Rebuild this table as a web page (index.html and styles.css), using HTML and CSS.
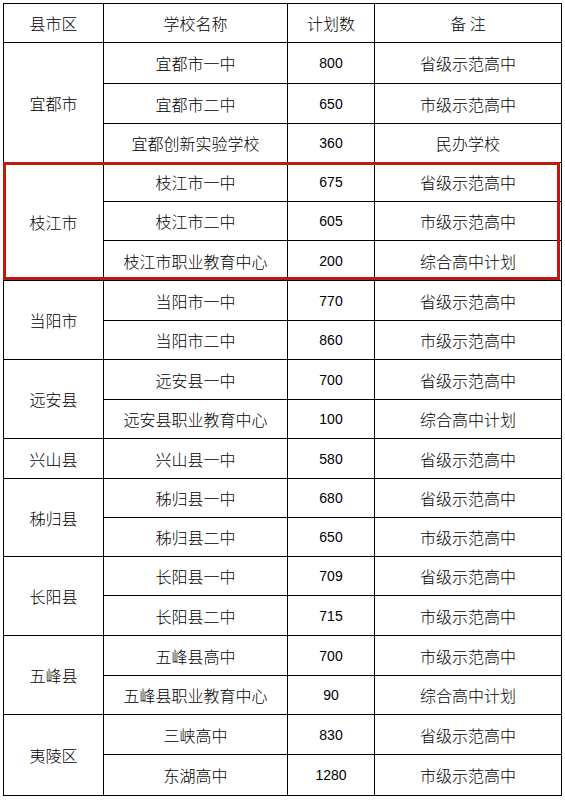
FILE: index.html
```html
<!DOCTYPE html>
<html lang="zh-CN">
<head>
<meta charset="utf-8">
<title>宜昌市学校计划数</title>
<link rel="stylesheet" href="styles.css">
</head>
<body>
<div class="sheet">
  <table class="plan">
    <colgroup>
      <col class="c-area">
      <col class="c-school">
      <col class="c-num">
      <col class="c-note">
    </colgroup>
    <thead>
      <tr class="head">
        <th>县市区</th>
        <th>学校名称</th>
        <th>计划数</th>
        <th>备&nbsp;注</th>
      </tr>
    </thead>
    <tbody>
      <tr class="r41"><td rowspan="3">宜都市</td><td>宜都市一中</td><td class="num">800</td><td>省级示范高中</td></tr>
      <tr class="r40"><td>宜都市二中</td><td class="num">650</td><td>市级示范高中</td></tr>
      <tr class="r39"><td>宜都创新实验学校</td><td class="num">360</td><td>民办学校</td></tr>
      <tr class="r39"><td rowspan="3">枝江市</td><td>枝江市一中</td><td class="num">675</td><td>省级示范高中</td></tr>
      <tr class="r39"><td>枝江市二中</td><td class="num">605</td><td>市级示范高中</td></tr>
      <tr class="r40"><td>枝江市职业教育中心</td><td class="num">200</td><td>综合高中计划</td></tr>
      <tr class="r40"><td rowspan="2">当阳市</td><td>当阳市一中</td><td class="num">770</td><td>省级示范高中</td></tr>
      <tr class="r39"><td>当阳市二中</td><td class="num">860</td><td>市级示范高中</td></tr>
      <tr class="r40"><td rowspan="2">远安县</td><td>远安县一中</td><td class="num">700</td><td>省级示范高中</td></tr>
      <tr class="r39"><td>远安县职业教育中心</td><td class="num">100</td><td>综合高中计划</td></tr>
      <tr class="r40"><td>兴山县</td><td>兴山县一中</td><td class="num">580</td><td>省级示范高中</td></tr>
      <tr class="r39"><td rowspan="2">秭归县</td><td>秭归县一中</td><td class="num">680</td><td>省级示范高中</td></tr>
      <tr class="r39"><td>秭归县二中</td><td class="num">650</td><td>市级示范高中</td></tr>
      <tr class="r39"><td rowspan="2">长阳县</td><td>长阳县一中</td><td class="num">709</td><td>省级示范高中</td></tr>
      <tr class="r40"><td>长阳县二中</td><td class="num">715</td><td>市级示范高中</td></tr>
      <tr class="r40"><td rowspan="2">五峰县</td><td>五峰县高中</td><td class="num">700</td><td>市级示范高中</td></tr>
      <tr class="r39"><td>五峰县职业教育中心</td><td class="num">90</td><td>综合高中计划</td></tr>
      <tr class="r40"><td rowspan="2">夷陵区</td><td>三峡高中</td><td class="num">830</td><td>省级示范高中</td></tr>
      <tr class="r41"><td>东湖高中</td><td class="num">1280</td><td>市级示范高中</td></tr>
    </tbody>
  </table>
  <div class="highlight"></div>
</div>
</body>
</html>
```

FILE: styles.css
```css
html, body {
  margin: 0;
  padding: 0;
  background: #ffffff;
}

body {
  font-family: "Noto Sans CJK SC", "Liberation Sans", sans-serif;
  color: #000000;
}

.sheet {
  position: relative;
  width: 558px;
  margin: 3px 0 0 3px;
}

.plan {
  width: 558px;
  border-collapse: collapse;
  table-layout: fixed;
}

.c-area { width: 100px; }
.c-school { width: 184px; }
.c-num { width: 87px; }
.c-note { width: 187px; }

.plan th,
.plan td {
  border: 1px solid #000000;
  padding: 0;
  text-align: center;
  vertical-align: middle;
  font-size: 16px;
  font-weight: 300;
  line-height: 20px;
  white-space: nowrap;
}

.plan .num {
  font-family: "Liberation Sans", sans-serif;
  font-size: 14px;
  font-weight: normal;
}

.head { height: 39px; }
.r39 { height: 39px; }
.r40 { height: 40px; }
.r41 { height: 41px; }

.highlight {
  position: absolute;
  left: 0;
  top: 159px;
  width: 551px;
  height: 112px;
  border: 3px solid #c0170f;
  pointer-events: none;
}
```
